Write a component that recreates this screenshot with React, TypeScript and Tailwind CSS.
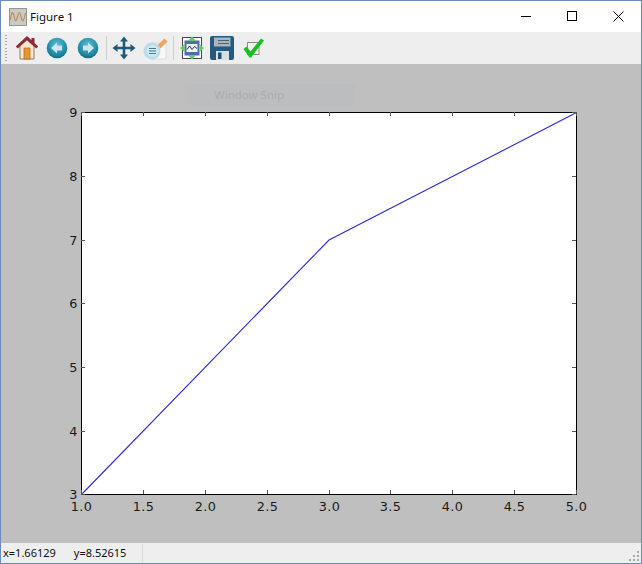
const xTicks = [
  { x: 81, label: "1.0" }, { x: 143, label: "1.5" }, { x: 205, label: "2.0" }, { x: 267, label: "2.5" },
  { x: 329, label: "3.0" }, { x: 390, label: "3.5" }, { x: 452, label: "4.0" }, { x: 514, label: "4.5" }, { x: 576, label: "5.0" },
];
const yTicks = [
  { y: 112, label: "9" }, { y: 176, label: "8" }, { y: 240, label: "7" }, { y: 303, label: "6" },
  { y: 367, label: "5" }, { y: 431, label: "4" }, { y: 494, label: "3" },
];

function Chart() {
  return (
    <svg width="640" height="479" viewBox="0 0 640 479" className="block">
      <g transform="translate(-1 -64)">
        <rect x="81.5" y="112.5" width="495" height="382" fill="#ffffff" />
        <polyline points="81.5,494.5 329,240 576.5,112.5" fill="none" stroke="#2a2ad8" strokeWidth="1.1" />
        <rect x="81.5" y="112.5" width="495" height="382" fill="none" stroke="#000000" strokeWidth="1" />
        {xTicks.map((t) => (
          <g key={t.label}>
            <path d={`M${t.x + 0.5} 494V490M${t.x + 0.5} 112V116`} stroke="#555555" strokeWidth="1" />
            <text x={t.x + 0.5} y="510.5" textAnchor="middle" fontFamily="'DejaVu Sans', sans-serif" fontSize="12.8" letterSpacing="0.3" fill="#1a1a1a">{t.label}</text>
          </g>
        ))}
        {yTicks.map((t) => (
          <g key={t.label}>
            <path d={`M81 ${t.y + 0.5}H85M576 ${t.y + 0.5}H572`} stroke="#555555" strokeWidth="1" />
            <text x="77.5" y={t.y + 4.5} textAnchor="end" fontFamily="'DejaVu Sans', sans-serif" fontSize="12.8" fill="#1a1a1a">{t.label}</text>
          </g>
        ))}
      </g>
    </svg>
  );
}

function AppIcon() {
  return (
    <svg width="18" height="18" viewBox="0 0 18 18">
      <rect x="0.5" y="0.5" width="17" height="17" fill="#cbc9c1" stroke="#96968f" />
      <path d="M1.5 12 C2.5 3 4 3 5 8 S7 15 8.5 9 S10.5 3 12 9 S14.5 14 16.5 5" fill="none" stroke="#b98a58" strokeWidth="1.1" />
    </svg>
  );
}

function HomeIcon() {
  return (
    <svg width="22" height="24" viewBox="0 0 22 24">
      <path d="M4 10V23H18V10L11 4Z" fill="#f8e8cc" stroke="#8f7c6c" strokeWidth="1" />
      <rect x="8" y="12" width="6" height="11" fill="#e8972f" stroke="#a8641e" strokeWidth="0.7" />
      <path d="M0.8 11.5L11 2L21.2 11.5" fill="none" stroke="#8f2a36" strokeWidth="2.8" />
      <rect x="15.5" y="2" width="3" height="5" fill="#8f2a36" />
    </svg>
  );
}

function ArrowCircle({ dir }: { dir: "left" | "right" }) {
  const id = dir === "left" ? "gl" : "gr";
  return (
    <svg width="22" height="22" viewBox="0 0 22 22">
      <defs>
        <radialGradient id={id} cx="0.5" cy="0.35" r="0.7">
          <stop offset="0" stopColor="#5cc0d0" />
          <stop offset="0.7" stopColor="#1d88a4" />
          <stop offset="1" stopColor="#0f5f80" />
        </radialGradient>
      </defs>
      <circle cx="11" cy="11" r="10.3" fill={`url(#${id})`} />
      <path
        d={dir === "left" ? "M5 11L11 5.5V8.5H16V13.5H11V16.5Z" : "M17 11L11 5.5V8.5H6V13.5H11V16.5Z"}
        fill="#cfe6ec"
      />
    </svg>
  );
}

function MoveIcon() {
  return (
    <svg width="24" height="24" viewBox="0 0 24 24" fill="#1f5a7c">
      <path d="M12 0.5L16 5.5H13.3V10.7H18.5V8L23.5 12L18.5 16V13.3H13.3V18.5H16L12 23.5L8 18.5H10.7V13.3H5.5V16L0.5 12L5.5 8V10.7H10.7V5.5H8Z" />
    </svg>
  );
}

function EditIcon() {
  return (
    <svg width="25" height="23" viewBox="0 0 25 23">
      <rect x="8" y="6" width="15" height="16" fill="#f9f9f7" stroke="#d8dcdd" />
      <path d="M14 8.5L21.5 1.5L24.5 4.5L17.5 11.5Z" fill="#eba565" />
      <circle cx="9" cy="14" r="8.5" fill="#b9dde8" />
      <circle cx="9.5" cy="14" r="6" fill="#cfe7ef" />
      <path d="M6 11.5H13M6 14H13M6 16.5H13" stroke="#4a7f96" strokeWidth="1.2" />
    </svg>
  );
}

function SubplotsIcon() {
  return (
    <svg width="24" height="24" viewBox="0 0 24 24">
      <rect x="2.5" y="1.5" width="19" height="21" fill="#ffffff" stroke="#3b4a58" />
      <rect x="4.5" y="4.5" width="15" height="15" fill="#4d6fa8" />
      <rect x="6.5" y="8" width="11" height="8" fill="#eef1f2" />
      <path d="M7 13.5L9.5 10L12 13.5L14.5 10.5L17 12.5" fill="none" stroke="#333333" strokeWidth="1" />
      <path d="M12 0.5L16 5H8ZM12 23.5L16 19H8ZM0 12L4.5 8V16ZM24 12L19.5 8V16Z" fill="#66cc6a" />
    </svg>
  );
}

function SaveIcon() {
  return (
    <svg width="24" height="24" viewBox="0 0 24 24">
      <path d="M2 0H22Q24 0 24 2V22Q24 24 22 24H2Q0 24 0 22V2Q0 0 2 0Z" fill="#245a80" />
      <rect x="4" y="1.5" width="16.5" height="9" fill="#a7b5bd" />
      <path d="M8 4.5H19M8 7.5H19" stroke="#4c6472" strokeWidth="1.2" />
      <rect x="6" y="15" width="13" height="9" fill="#d9dfe2" />
      <rect x="8" y="16.5" width="3.5" height="6.5" fill="#234f70" />
    </svg>
  );
}

function CheckIcon() {
  return (
    <svg width="22" height="22" viewBox="0 0 22 22">
      <rect x="4.5" y="5.5" width="11.5" height="12" fill="#f3f3f1" stroke="#8a8a86" />
      <path d="M0.5 12L3.5 9.5L7.5 14.5L18 1.5L21 3.5L8 20.5H6.5Z" fill="#14c21e" />
    </svg>
  );
}

function Grip() {
  return (
    <div className="flex h-[26px] w-[3px] flex-col justify-between self-center">
      {Array.from({ length: 9 }).map((_, i) => (
        <div key={i} className="h-[1px] w-[2px] bg-[#a8a8a8]" />
      ))}
    </div>
  );
}

function Sep() {
  return <div className="h-[24px] w-[1px] bg-[#cfcfcf]" />;
}

export default function App() {
  return (
    <div className="relative flex h-[564px] w-[642px] flex-col overflow-hidden border border-[#6b8cb8] bg-white font-['Noto_Sans',sans-serif]">
      <div className="flex h-[31px] shrink-0 items-center bg-white">
        <div className="ml-[8px]"><AppIcon /></div>
        <span className="ml-[3px] text-[11.5px] text-[#111111]">Figure 1</span>
        <div className="ml-auto flex h-full items-center pb-[1px]">
          <div className="flex h-full w-[46px] items-center justify-center">
            <div className="h-[1px] w-[10px] bg-black" />
          </div>
          <div className="flex h-full w-[46px] items-center justify-center">
            <div className="h-[10px] w-[10px] border border-black" />
          </div>
          <div className="flex h-full w-[46px] items-center justify-center">
            <svg width="11" height="11" viewBox="0 0 11 11"><path d="M0.5 0.5L10.5 10.5M10.5 0.5L0.5 10.5" stroke="#000" strokeWidth="1" /></svg>
          </div>
        </div>
      </div>
      <div className="flex h-[32px] shrink-0 items-center bg-[#eeeeee] pl-[4px]">
        <Grip />
        <div className="ml-[7px] w-[24px] pl-[1px]"><HomeIcon /></div>
        <div className="ml-[7px]"><ArrowCircle dir="left" /></div>
        <div className="ml-[9px]"><ArrowCircle dir="right" /></div>
        <div className="ml-[7px]"><Sep /></div>
        <div className="ml-[5px]"><MoveIcon /></div>
        <div className="ml-[7px]"><EditIcon /></div>
        <div className="ml-[5px]"><Sep /></div>
        <div className="ml-[6px]"><SubplotsIcon /></div>
        <div className="ml-[6px]"><SaveIcon /></div>
        <div className="ml-[9px]"><CheckIcon /></div>
      </div>
      <div className="relative flex-1 bg-[#bfbfbf]">
        <Chart />
        <div className="absolute left-[184px] top-[20px] flex h-[21px] w-[170px] items-center rounded-sm bg-[#bcbdbe] pl-[29px] pt-[1px] text-[11.5px] text-[#abadaf]">
          Window Snip
        </div>
      </div>
      <div className="relative flex h-[20px] shrink-0 items-center bg-[#eeeeee] pl-[2px] text-[11px] text-[#111111]">
        <span>x=1.66129</span>
        <span className="ml-[18px]">y=8.52615</span>
        <div className="absolute left-[141px] top-[1px] h-[18px] w-[1px] bg-[#d8d8d8]" />
        <svg className="absolute bottom-[1px] right-[1px]" width="11" height="11" viewBox="0 0 11 11" fill="#a9a9a9">
          <rect x="8" y="0" width="2" height="2" /><rect x="4" y="4" width="2" height="2" /><rect x="8" y="4" width="2" height="2" />
          <rect x="0" y="8" width="2" height="2" /><rect x="4" y="8" width="2" height="2" /><rect x="8" y="8" width="2" height="2" />
        </svg>
      </div>
    </div>
  );
}
